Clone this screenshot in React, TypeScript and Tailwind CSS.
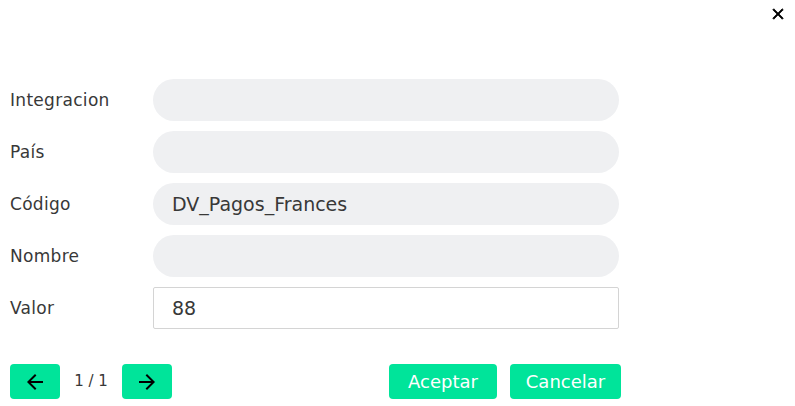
const fields = [
  { label: "Integracion", value: "" },
  { label: "País", value: "" },
  { label: "Código", value: "DV_Pagos_Frances" },
  { label: "Nombre", value: "" },
];

const green = "bg-[#00e49a]";

function ArrowIcon({ dir }: { dir: "left" | "right" }) {
  return (
    <svg width="24" height="24" viewBox="0 0 24 24" className={dir === "right" ? "rotate-180" : ""}>
      <path fill="currentColor" d="M20 11H7.83l5.59-5.59L12 4l-8 8 8 8 1.41-1.41L7.83 13H20v-2z" />
    </svg>
  );
}

export default function App() {
  return (
    <div className="relative h-[406px] w-[795px] bg-white [font-family:'DejaVu_Sans',sans-serif] text-[#383838]">
      <button className="absolute left-[769px] top-[5px] text-black">
        <svg width="18" height="18" viewBox="0 0 24 24">
          <path
            fill="currentColor"
            stroke="currentColor"
            strokeWidth="1"
            d="M19 6.41 17.59 5 12 10.59 6.41 5 5 6.41 10.59 12 5 17.59 6.41 19 12 13.41 17.59 19 19 17.59 13.41 12z"
          />
        </svg>
      </button>
      <div className="flex flex-col gap-[10px] pl-[10px] pt-[79px]">
        {fields.map((f) => (
          <div key={f.label} className="flex items-center">
            <label className="w-[143px] pt-[2px] text-[17px] tracking-[0.3px]">{f.label}</label>
            <div className="flex h-[42px] w-[466px] items-center rounded-[21px] bg-[#eff0f2] px-[19px] text-[19px]">
              {f.value}
            </div>
          </div>
        ))}
        <div className="flex items-center">
          <label className="w-[143px] pt-[2px] text-[17px] tracking-[0.3px]">Valor</label>
          <input
            defaultValue="88"
            className="h-[42px] w-[466px] rounded-[2px] border border-[#d4d4d4] px-[18px] [font-family:'DejaVu_Sans',sans-serif] text-[19px] text-[#383838] outline-none"
          />
        </div>
      </div>
      <div className="mt-[35px] flex items-center pl-[10px]">
        <button className={`flex h-[35px] w-[50px] items-center justify-center rounded-[4px] ${green} text-black`}>
          <ArrowIcon dir="left" />
        </button>
        <span className="w-[62px] text-center text-[15px]">1 / 1</span>
        <button className={`flex h-[35px] w-[50px] items-center justify-center rounded-[4px] ${green} text-black`}>
          <ArrowIcon dir="right" />
        </button>
        <button className={`ml-[217px] h-[35px] w-[108px] rounded-[4px] ${green} text-[18px] text-white`}>
          Aceptar
        </button>
        <button className={`ml-[13px] h-[35px] w-[111px] rounded-[4px] ${green} text-[18px] text-white`}>
          Cancelar
        </button>
      </div>
    </div>
  );
}
